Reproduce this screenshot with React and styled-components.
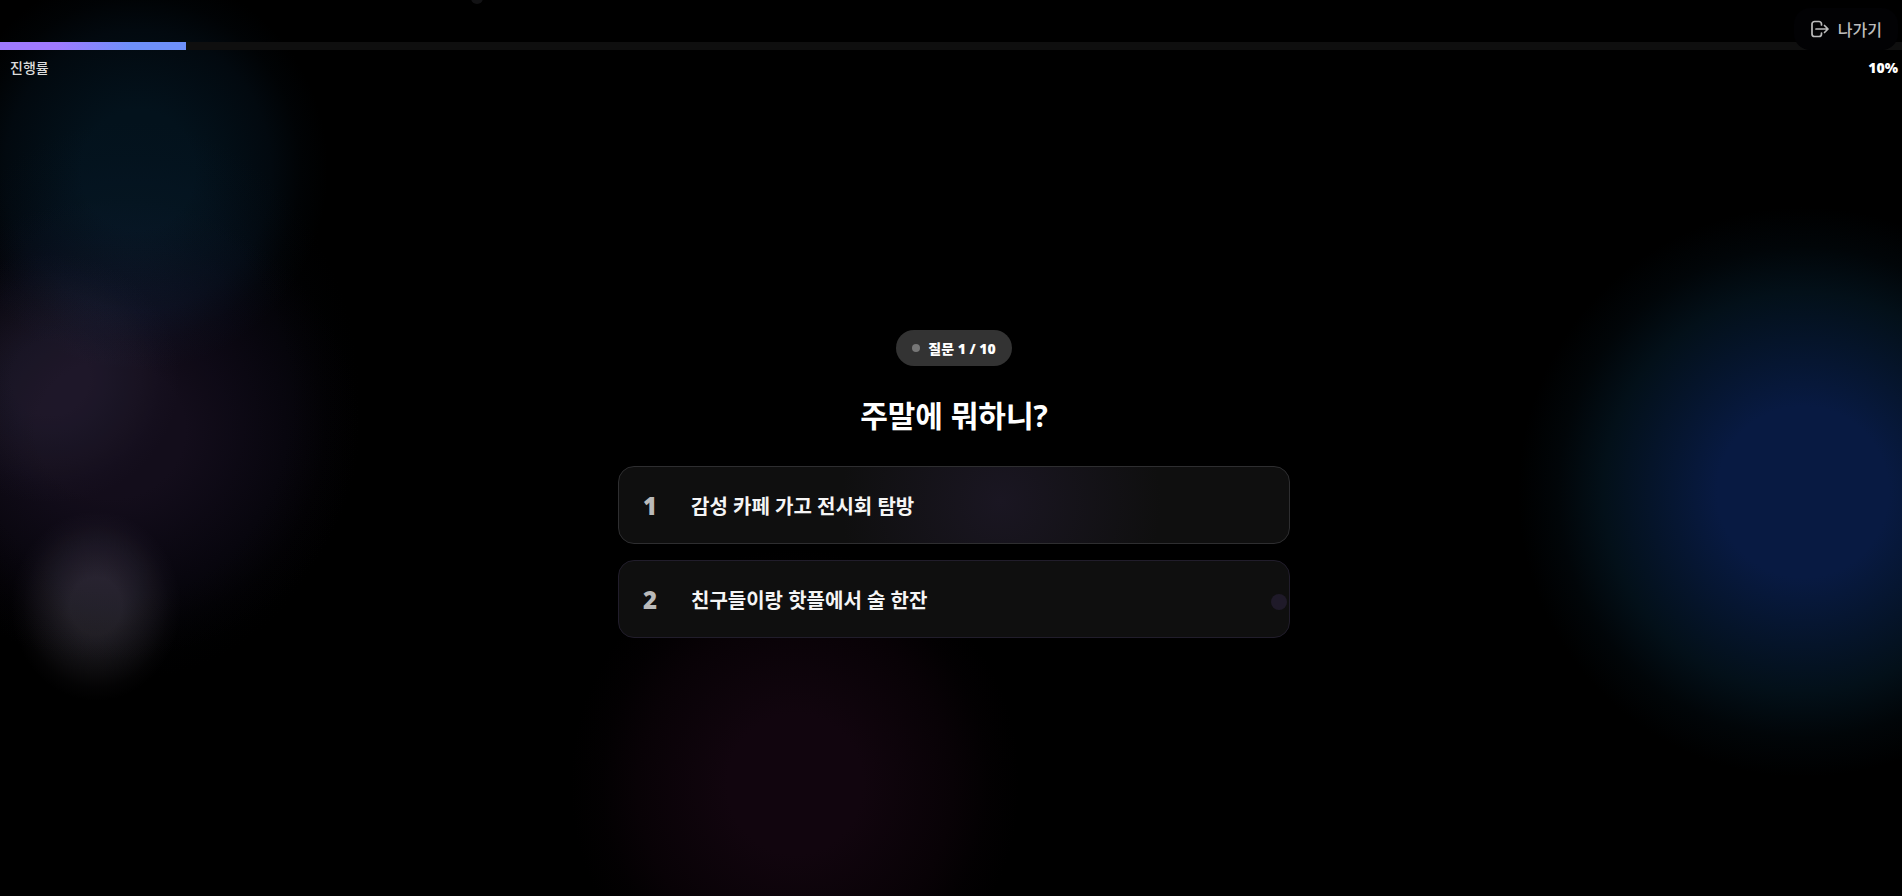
import React, { useState } from 'react';
import styled, { createGlobalStyle } from 'styled-components';

const question = {
    id: 1,
    total: 10,
    title: '주말에 뭐하니?',
    answers: [
        { id: 1, text: '감성 카페 가고 전시회 탐방', glow: true },
        { id: 2, text: '친구들이랑 핫플에서 술 한잔', glow: false },
    ],
};

// 배경에 떠다니는 빛
const glows = [
    { id: 'sky', x: '138px', y: '170px', w: 380, h: 400, core: '#03121c', rim: '#02090f' },
    { id: 'haze', x: '130px', y: '400px', w: 460, h: 560, core: '#020308', rim: '#020306' },
    { id: 'violet', x: '110px', y: '430px', w: 500, h: 460, core: '#110a14', rim: '#060308' },
    { id: 'lilac', x: '50px', y: '378px', w: 260, h: 250, core: '#0c0b10', rim: '#050507' },
    { id: 'pearl', x: '96px', y: '606px', w: 170, h: 190, core: '#1f1d22', rim: '#0c0b0d' },
    { id: 'blue', x: '94.8%', y: '492px', w: 570, h: 570, core: '#081a42', rim: '#031019' },
    { id: 'wine', x: '41.8%', y: '784px', w: 450, h: 470, core: '#11050e', rim: '#080206' },
];

const App = () => {
    const [selected, setSelected] = useState(null);

    return (
        <Page>
            <GlobalStyle />
            <Background aria-hidden="true">
                {glows.map((glow) => (
                    <Glow
                        key={glow.id}
                        $x={glow.x}
                        $y={glow.y}
                        $w={glow.w}
                        $h={glow.h}
                        $core={glow.core}
                        $rim={glow.rim}
                    />
                ))}
                <Particle $x="25.1%" $y="-2px" $size={12} $color="#121214" />
            </Background>

            <Header>
                <ExitButton type="button">
                    <ExitIcon />
                    나가기
                </ExitButton>
                <ProgressTrack
                    role="progressbar"
                    aria-labelledby="progress-label"
                    aria-valuenow={10}
                >
                    <ProgressFill />
                </ProgressTrack>
                <ProgressInfo>
                    <ProgressLabel id="progress-label">진행률</ProgressLabel>
                    <ProgressValue>10%</ProgressValue>
                </ProgressInfo>
            </Header>

            <Main>
                <Question>
                    <QuestionBadge>
                        <BadgeDot />
                        질문 {question.id} / {question.total}
                    </QuestionBadge>
                    <Title>{question.title}</Title>
                    <AnswerList>
                        {question.answers.map((answer) => (
                            <li key={answer.id}>
                                <AnswerButton
                                    type="button"
                                    $glow={answer.glow}
                                    aria-pressed={selected === answer.id}
                                    onClick={() => setSelected(answer.id)}
                                >
                                    <AnswerNumber>{answer.id}</AnswerNumber>
                                    <span>{answer.text}</span>
                                </AnswerButton>
                            </li>
                        ))}
                    </AnswerList>
                </Question>
            </Main>
            <Particle $x="67.25%" $y="602px" $size={16} $color="#1f1a29" />
        </Page>
    );
};

const ExitIcon = () => (
    <svg
        width="20"
        height="20"
        viewBox="0 0 20 20"
        fill="none"
        stroke="currentColor"
        strokeWidth="1.7"
        strokeLinecap="round"
        strokeLinejoin="round"
        aria-hidden="true"
    >
        <path d="M11.500 6V5A2.500 2.500 0 0 0 9 2.500H4.500A2.500 2.500 0 0 0 2 5v10a2.500 2.500 0 0 0 2.500 2.500H9A2.500 2.500 0 0 0 11.500 15v-1" />
        <path d="M6 10h12M14.500 6.500 18 10l-3.500 3.500" />
    </svg>
);

const GlobalStyle = createGlobalStyle`
    * {
        box-sizing: border-box;
    }

    body {
        margin: 0;
        background-color: #000;
        color: #fff;
        font-family: 'Open Sans', 'Noto Sans CJK KR', sans-serif;
    }

    button {
        font-family: inherit;
        cursor: pointer;
    }
`;

const Page = styled.div`
    position: relative;
    display: flex;
    flex-direction: column;
    min-height: 100vh;
    overflow: hidden;
`;

const Background = styled.div`
    position: absolute;
    inset: 0;
    overflow: hidden;
    isolation: isolate;
`;

const Glow = styled.div`
    position: absolute;
    left: ${({ $x }) => $x};
    top: ${({ $y }) => $y};
    width: ${({ $w }) => $w}px;
    height: ${({ $h }) => $h}px;
    transform: translate(-50%, -50%);
    border-radius: 50%;
    mix-blend-mode: screen;
    background: radial-gradient(
        closest-side,
        ${({ $core }) => $core} 30%,
        ${({ $rim }) => $rim} 70%,
        ${({ $rim }) => $rim}55 86%,
        ${({ $rim }) => $rim}00 100%
    );
`;

const Particle = styled.span`
    position: absolute;
    left: ${({ $x }) => $x};
    top: ${({ $y }) => $y};
    width: ${({ $size }) => $size}px;
    height: ${({ $size }) => $size}px;
    transform: translate(-50%, -50%);
    border-radius: 50%;
    background-color: ${({ $color }) => $color};
    pointer-events: none;
`;

const Header = styled.header`
    position: relative;
    display: flex;
    flex-direction: column;
    padding-top: 8px;
`;

const ExitButton = styled.button`
    position: relative;
    z-index: 1;
    display: flex;
    align-items: center;
    align-self: flex-end;
    gap: 8px;
    height: 42px;
    margin-right: 4px;
    margin-bottom: -8px;
    padding: 0 16px;
    border: 0;
    border-radius: 16px;
    background-color: #020204;
    color: #bcbcbc;
    font-size: 16px;
    font-weight: 500;
`;

const ProgressTrack = styled.div`
    height: 8px;
    background-color: #0f0f0f;
`;

const ProgressFill = styled.div`
    width: 9.8%;
    height: 100%;
    background: linear-gradient(to right, #a07aff 30%, #6e90fa 70%);
`;

const ProgressInfo = styled.div`
    display: flex;
    justify-content: space-between;
    padding: 8px 4px 0 10px;
    font-size: 14px;
    line-height: 20px;
`;

const ProgressLabel = styled.span`
    color: #dcdcdc;
    font-weight: 500;
`;

const ProgressValue = styled.span`
    font-weight: 800;
`;

const Main = styled.main`
    position: relative;
    display: flex;
    flex: 1;
    align-items: center;
    justify-content: center;
    padding: 0 16px 6px 22px;
`;

const Question = styled.section`
    display: flex;
    flex-direction: column;
    align-items: center;
    width: 100%;
    max-width: 672px;
`;

const QuestionBadge = styled.div`
    display: flex;
    align-items: center;
    gap: 8px;
    height: 36px;
    padding: 0 16px;
    border-radius: 18px;
    background-color: #333;
    font-size: 14px;
    font-weight: 800;
`;

const BadgeDot = styled.span`
    width: 8px;
    height: 8px;
    border-radius: 50%;
    background-color: #777;
`;

const Title = styled.h1`
    margin: 32px 0;
    font-size: 30px;
    font-weight: 700;
    line-height: 36px;
`;

const AnswerList = styled.ul`
    display: flex;
    flex-direction: column;
    gap: 16px;
    width: 100%;
    margin: 0;
    padding: 0;
    list-style: none;
`;

const AnswerButton = styled.button`
    display: flex;
    align-items: center;
    gap: 24px;
    width: 100%;
    height: 78px;
    padding: 0 24px;
    border: 1px solid ${({ $glow }) => ($glow ? '#2e2e30' : '#211d2b')};
    border-radius: 16px;
    background: ${({ $glow }) =>
        $glow
            ? 'radial-gradient(circle 160px at 57% 45%, #1a1622, #0f0f0f)'
            : '#0f0f0f'};
    color: #f5f5f5;
    font-size: 20px;
    font-weight: 600;
    text-align: left;
`;

const AnswerNumber = styled.span`
    width: 24px;
    color: #bababa;
    font-size: 24px;
    font-weight: 900;
`;

export default App;
